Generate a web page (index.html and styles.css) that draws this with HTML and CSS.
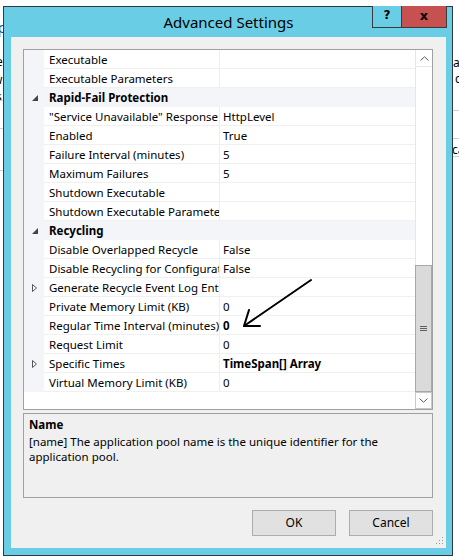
FILE: index.html
```html
<!DOCTYPE html>
<html>
<head>
<meta charset="utf-8">
<link rel="stylesheet" href="styles.css">
</head>
<body>
<div class="desktop">
  <div class="bg-left">
    <div class="frag f-l1">Ap</div>
    <div class="frag f-l2">e</div>
    <div class="frag f-l3">w</div>
    <div class="frag f-l4">s</div>
    <div class="bgline b-l1"></div>
    <div class="bgline b-l2"></div>
    <div class="bgline b-l3"></div>
  </div>
  <div class="bg-right">
    <div class="frag f-r1">ar</div>
    <div class="frag f-r2">c</div>
    <div class="frag f-r3">ca</div>
    <div class="bgline b-r1"></div>
    <div class="bgline b-r2"></div>
    <div class="bgline b-r3"></div>
  </div>

  <div class="dialog">
    <div class="titlebar">
      <div class="title">Advanced Settings</div>
      <div class="caption-btns">
        <div class="cbtn help">?</div>
        <div class="cbtn close">x</div>
      </div>
    </div>
    <div class="client">
      <div class="propgrid">
        <div class="rows">
          <div class="row"><div class="margin"></div><div class="name">Executable</div><div class="value"></div></div>
          <div class="row"><div class="margin"></div><div class="name">Executable Parameters</div><div class="value"></div></div>
          <div class="row cat"><div class="margin"><svg class="exp" width="6" height="6" viewBox="0 0 6 6"><path d="M6 0 L6 6 L0 6 Z" fill="#444"/></svg></div><div class="name">Rapid-Fail Protection</div></div>
          <div class="row"><div class="margin"></div><div class="name">"Service Unavailable" Response Type</div><div class="value">HttpLevel</div></div>
          <div class="row"><div class="margin"></div><div class="name">Enabled</div><div class="value">True</div></div>
          <div class="row"><div class="margin"></div><div class="name">Failure Interval (minutes)</div><div class="value">5</div></div>
          <div class="row"><div class="margin"></div><div class="name">Maximum Failures</div><div class="value">5</div></div>
          <div class="row"><div class="margin"></div><div class="name">Shutdown Executable</div><div class="value"></div></div>
          <div class="row"><div class="margin"></div><div class="name">Shutdown Executable Parameters</div><div class="value"></div></div>
          <div class="row cat"><div class="margin"><svg class="exp" width="6" height="6" viewBox="0 0 6 6"><path d="M6 0 L6 6 L0 6 Z" fill="#444"/></svg></div><div class="name">Recycling</div></div>
          <div class="row"><div class="margin"></div><div class="name">Disable Overlapped Recycle</div><div class="value">False</div></div>
          <div class="row"><div class="margin"></div><div class="name">Disable Recycling for Configuration Changes</div><div class="value">False</div></div>
          <div class="row"><div class="margin"><svg class="col" width="5" height="8" viewBox="0 0 5 8"><path d="M0.5 0.5 L4.5 4 L0.5 7.5 Z" fill="none" stroke="#555" stroke-width="1"/></svg></div><div class="name">Generate Recycle Event Log Entry</div><div class="value"></div></div>
          <div class="row"><div class="margin"></div><div class="name">Private Memory Limit (KB)</div><div class="value">0</div></div>
          <div class="row"><div class="margin"></div><div class="name">Regular Time Interval (minutes)</div><div class="value bold">0</div></div>
          <div class="row"><div class="margin"></div><div class="name">Request Limit</div><div class="value">0</div></div>
          <div class="row"><div class="margin"><svg class="col" width="5" height="8" viewBox="0 0 5 8"><path d="M0.5 0.5 L4.5 4 L0.5 7.5 Z" fill="none" stroke="#555" stroke-width="1"/></svg></div><div class="name">Specific Times</div><div class="value bold">TimeSpan[] Array</div></div>
          <div class="row"><div class="margin"></div><div class="name">Virtual Memory Limit (KB)</div><div class="value">0</div></div>
        </div>
        <div class="scrollbar">
          <div class="sb-btn up"><svg width="9" height="5" viewBox="0 0 9 5"><path d="M0.5 4.5 L4.5 0.8 L8.5 4.5" fill="none" stroke="#606060" stroke-width="1"/></svg></div>
          <div class="sb-track">
            <div class="sb-thumb">
              <div class="grip-lines"><span></span><span></span><span></span></div>
            </div>
          </div>
          <div class="sb-btn down"><svg width="9" height="5" viewBox="0 0 9 5"><path d="M0.5 0.5 L4.5 4.2 L8.5 0.5" fill="none" stroke="#606060" stroke-width="1"/></svg></div>
        </div>
      </div>
      <div class="desc">
        <div class="desc-title">Name</div>
        <div class="desc-text">[name] The application pool name is the unique identifier for the<br>application pool.</div>
      </div>
      <div class="buttons">
        <div class="btn">OK</div>
        <div class="btn">Cancel</div>
      </div>
    </div>
    <svg class="sizegrip" width="8" height="8" viewBox="0 0 8 8">
      <rect x="6" y="0" width="1" height="1" fill="#9a9a9a"/>
      <rect x="3" y="3" width="1" height="1" fill="#9a9a9a"/>
      <rect x="6" y="3" width="1" height="1" fill="#9a9a9a"/>
      <rect x="0" y="6" width="1" height="1" fill="#9a9a9a"/>
      <rect x="3" y="6" width="1" height="1" fill="#9a9a9a"/>
      <rect x="6" y="6" width="1" height="1" fill="#9a9a9a"/>
    </svg>
  </div>

  <svg class="annotation" width="459" height="560" viewBox="0 0 459 560">
    <path d="M311 280 L244 326" stroke="#000" stroke-width="2" fill="none" stroke-linecap="round"/>
    <path d="M249 310 L244 326 L260 326" stroke="#000" stroke-width="2" fill="none" stroke-linecap="round" stroke-linejoin="round"/>
  </svg>
</div>
</body>
</html>
```

FILE: styles.css
```css
* { box-sizing: border-box; }
html, body { margin: 0; padding: 0; }
body {
  background: #fff;
  font-family: "Noto Sans", "Open Sans", sans-serif;
  font-size: 11.5px;
  color: #000;
}
.desktop {
  position: relative;
  width: 459px;
  height: 560px;
  overflow: hidden;
  padding: 6px 0 0 3px;
}

/* background window fragments */
.bg-left, .bg-right { position: absolute; top: 0; height: 560px; }
.bg-left { left: 0; width: 4px; }
.bg-right { left: 452px; width: 7px; }
.frag { position: absolute; font-size: 12px; line-height: 14px; white-space: nowrap; }
.f-l1 { left: -12px; top: 20px; color: #1d3f80; font-size: 15px; }
.f-l2 { left: -4px; top: 55px; }
.f-l3 { left: -7px; top: 73px; }
.f-l4 { left: -4px; top: 90px; }
.f-r1 { left: 1px; top: 56px; }
.f-r2 { left: 3px; top: 72px; }
.f-r3 { left: 0px; top: 143px; }
.bgline { position: absolute; height: 1px; background: #cfcfcf; width: 10px; left: 0; }
.b-l1 { top: 100px; }
.b-l2 { top: 128px; }
.b-l3 { top: 170px; }
.b-r1 { top: 110px; }
.b-r2 { top: 138px; }
.b-r3 { top: 156px; }

/* dialog frame */
.dialog {
  position: relative;
  width: 450px;
  height: 550px;
  background: #69cde6;
  border: 1px solid #2f3a40;
  padding: 0 6px 7px 7px;
  display: flex;
  flex-direction: column;
}
.titlebar {
  height: 30px;
  flex: none;
  position: relative;
}
.title {
  text-align: center;
  font-size: 15px;
  line-height: 31px;
  color: #000;
}
.caption-btns {
  position: absolute;
  top: -1px;
  right: -1px;
  display: flex;
  border: 1px solid #3a3a3a;
  border-top: none;
}
.cbtn {
  height: 21px;
  font-weight: bold;
  font-size: 13px;
  line-height: 19px;
  text-align: center;
  font-family: "DejaVu Sans", sans-serif;
}
.cbtn.help { width: 29px; background: #69cde6; border-right: 1px solid #3a3a3a; font-size: 12px; }
.cbtn.close { width: 44px; background: #c75050; font-size: 13px; }

.client {
  flex: 1;
  background: #f0f0f0;
  padding: 12px 13px 0 12px;
  display: flex;
  flex-direction: column;
}

/* property grid */
.propgrid {
  height: 361px;
  flex: none;
  border: 1px solid #a0a0a0;
  background: #fff;
  display: flex;
}
.rows { flex: 1; display: flex; flex-direction: column; }
.row { display: flex; height: 19px; }
.margin {
  width: 20px;
  flex: none;
  background: #f3f5f8;
  display: flex;
  align-items: center;
  justify-content: center;
}
.name {
  width: 176px;
  flex: none;
  padding-left: 5px;
  padding-top: 1px;
  line-height: 17px;
  border-right: 1px solid #eeeeee;
  border-bottom: 1px solid #f0f0f0;
  white-space: nowrap;
  overflow: hidden;
}
.value {
  flex: 1;
  padding-left: 3px;
  padding-top: 1px;
  line-height: 17px;
  border-bottom: 1px solid #f0f0f0;
  white-space: nowrap;
  overflow: hidden;
}
.bold { font-weight: bold; }
.row.cat .name {
  flex: 1;
  width: auto;
  background: #f3f5f8;
  border-right: none;
  border-bottom: none;
  font-weight: bold;
}
.exp { margin-left: 2px; margin-top: 1px; }
.col { margin-left: 1px; }

.scrollbar {
  width: 17px;
  flex: none;
  display: flex;
  flex-direction: column;
  background: #fff;
  border-left: 1px solid #e6e6e6;
}
.sb-btn {
  height: 17px;
  flex: none;
  display: flex;
  align-items: center;
  justify-content: center;
}
.sb-btn.up { border-bottom: 1px solid #e6e6e6; }
.sb-btn.down { border: 1px solid #c8c8c8; margin-left: -1px; }
.sb-track {
  flex: 1;
  display: flex;
  flex-direction: column;
  justify-content: flex-end;
}
.sb-thumb {
  height: 127px;
  margin-left: -1px;
  background: #dadada;
  border: 1px solid #a8a8a8;
  display: flex;
  align-items: center;
  justify-content: center;
}
.grip-lines { display: flex; flex-direction: column; gap: 1px; }
.grip-lines span { display: block; width: 7px; height: 1px; background: #606060; }

/* description */
.desc {
  margin-top: 3px;
  height: 85px;
  flex: none;
  border: 1px solid #a0a0a0;
  padding: 3px 5px;
  line-height: 15px;
}
.desc-title { font-weight: bold; line-height: 15px; margin-bottom: 1px; }
.desc-text { padding-top: 1px; }

.buttons {
  margin-top: 12px;
  display: flex;
  justify-content: flex-end;
  gap: 13px;
}
.btn {
  width: 84px;
  height: 26px;
  background: #e1e1e1;
  border: 1px solid #adadad;
  text-align: center;
  line-height: 24px;
  font-size: 12px;
}

.sizegrip { position: absolute; right: 8px; bottom: 10px; }
.annotation { position: absolute; left: 0; top: 0; pointer-events: none; }
```
